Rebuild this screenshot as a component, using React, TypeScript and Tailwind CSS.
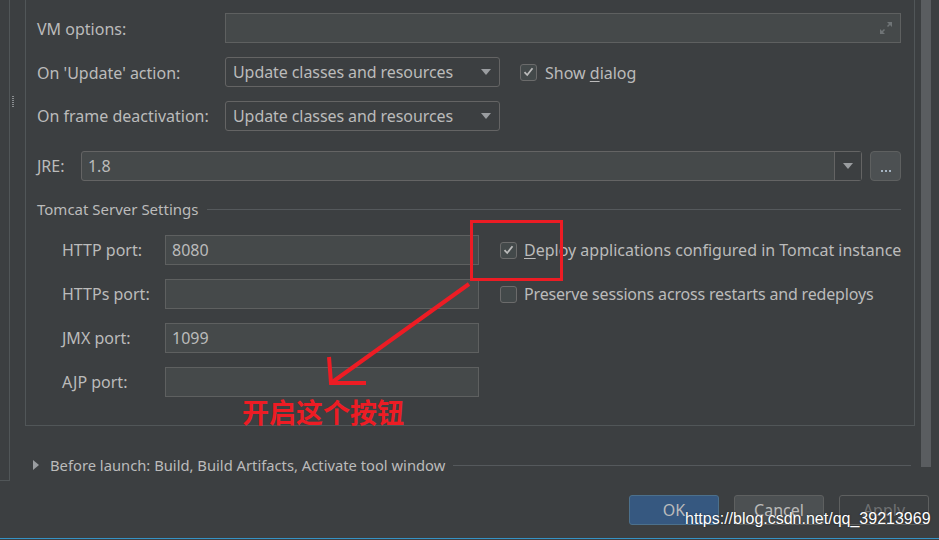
import React from 'react';

const Checkbox = ({ checked }: { checked?: boolean }) => (
    <span className="flex h-[17px] w-[17px] shrink-0 items-center justify-center rounded-[3px] border border-[#6b6b6b] bg-[#43494a]">
        {checked && (
            <svg width="11" height="10" viewBox="0 0 11 10">
                <path d="M1.5 5.2 L4.2 8 L9.5 1.2" stroke="#bbbbbb" strokeWidth="1.8" fill="none" />
            </svg>
        )}
    </span>
);

const Triangle = () => (
    <svg width="10" height="6" viewBox="0 0 10 6">
        <path d="M0 0 H10 L5 6 Z" fill="#9a9da0" />
    </svg>
);

const Dropdown = ({ value }: { value: string }) => (
    <div className="flex h-[30px] w-[275px] items-center justify-between rounded-[3px] border border-[#646464] bg-[#3c3f41] pl-[7px] pr-[8px]">
        <span className="tracking-[-0.08px]">{value}</span>
        <Triangle />
    </div>
);

const PortRow = ({ label, value }: { label: string; value?: string }) => (
    <div className="flex h-[30px] items-center">
        <span className="w-[103px]">{label}</span>
        <div className="flex h-[30px] w-[314px] items-center border border-[#5e6060] bg-[#45494a] pl-[6px]">
            {value}
        </div>
    </div>
);

const App = () => {
    return (
        <div
            className="relative h-[540px] w-[939px] overflow-hidden bg-[#3c3f41] text-[16px] text-[#bbbbbb]"
            style={{ fontFamily: '"Noto Sans", "Open Sans", sans-serif' }}
        >
            <div className="flex h-[481px]">
                {/* left side strip */}
                <div className="relative h-[481px] w-[10px] shrink-0 border-b border-r border-[#515658]">
                    <div className="absolute left-[12px] top-[96px] grid grid-cols-2 gap-x-[1px] gap-y-[1px]">
                        {Array.from({ length: 12 }).map((_, i) => (
                            <span key={i} className="h-[1px] w-[1px] bg-[#8a8d90]" />
                        ))}
                    </div>
                </div>

                <div className="ml-[15px] flex w-[890px] flex-col">
                    {/* settings panel */}
                    <div className="flex h-[426px] flex-col border-x border-b border-[#515658] pl-[11px] pr-[13px] pt-[13px]">
                        <div className="flex flex-col gap-[14px]">
                            <div className="flex h-[30px] items-center">
                                <span className="w-[188px] pt-[1px]">VM options:</span>
                                <div className="flex h-[30px] flex-1 items-center justify-end border border-[#5e6060] bg-[#45494a] pr-[7px]">
                                    <svg width="14" height="14" viewBox="0 0 14 14">
                                        <path d="M8 1 H13 V6 Z M1 8 V13 H6 Z" fill="#6f7476" />
                                        <path d="M11 3 L8.5 5.5 M3 11 L5.5 8.5" stroke="#6f7476" strokeWidth="1.5" />
                                    </svg>
                                </div>
                            </div>
                            <div className="flex h-[30px] items-center">
                                <span className="w-[188px] pt-[1px]">On 'Update' action:</span>
                                <Dropdown value="Update classes and resources" />
                                <div className="ml-[20px] flex items-center gap-[8px]">
                                    <Checkbox checked />
                                    <span className="pt-[1px]">
                                        Show <span className="underline underline-offset-2">d</span>ialog
                                    </span>
                                </div>
                            </div>
                            <div className="flex h-[30px] items-center">
                                <span className="w-[188px]">On frame deactivation:</span>
                                <Dropdown value="Update classes and resources" />
                            </div>
                        </div>

                        <div className="mt-[20px] flex h-[30px] items-center">
                            <span className="w-[44px]">JRE:</span>
                            <div className="flex h-[30px] w-[782px] items-center rounded-[3px] border border-[#646464] bg-[#45494a]">
                                <span className="flex-1 pl-[6px]">1.8</span>
                                <div className="flex h-full w-[27px] items-center justify-center border-l border-[#646464] bg-[#3c3f41]">
                                    <Triangle />
                                </div>
                            </div>
                            <div className="ml-[8px] flex h-[30px] w-[31px] items-end justify-center rounded-[4px] border border-[#5e6060] bg-[#4c5052] pb-[8px]">
                                <div className="flex gap-[2px]">
                                    <span className="h-[2px] w-[2px] bg-[#a5b4c2]" />
                                    <span className="h-[2px] w-[2px] bg-[#a5b4c2]" />
                                    <span className="h-[2px] w-[2px] bg-[#a5b4c2]" />
                                </div>
                            </div>
                        </div>

                        <div className="mt-[18px] flex h-[20px] items-center gap-[9px]">
                            <span className="text-[15px]">Tomcat Server Settings</span>
                            <div className="h-px flex-1 bg-[#55595c]" />
                        </div>

                        <div className="mt-[16px] flex gap-[21px] pl-[25px]">
                            <div className="flex flex-col gap-[14px]">
                                <PortRow label="HTTP port:" value="8080" />
                                <PortRow label="HTTPs port:" />
                                <PortRow label="JMX port:" value="1099" />
                                <PortRow label="AJP port:" />
                            </div>
                            <div className="flex flex-col gap-[14px]">
                                <div className="flex h-[30px] items-center gap-[7px]">
                                    <Checkbox checked />
                                    <span className="whitespace-nowrap">
                                        <span className="underline underline-offset-2">D</span>eploy applications configured in Tomcat instance
                                    </span>
                                </div>
                                <div className="flex h-[30px] items-center gap-[7px]">
                                    <Checkbox />
                                    <span className="whitespace-nowrap tracking-[-0.17px]">Preserve sessions across restarts and redeploys</span>
                                </div>
                            </div>
                        </div>
                    </div>

                    {/* before launch */}
                    <div className="mt-[29px] flex h-[20px] items-center pl-[8px]">
                        <svg width="6" height="10" viewBox="0 0 6 10">
                            <path d="M0 0 L6 5 L0 10 Z" fill="#9a9da0" />
                        </svg>
                        <span className="ml-[11px] text-[14.75px]">Before launch: Build, Build Artifacts, Activate tool window</span>
                        <div className="ml-[8px] mr-[4px] h-px flex-1 bg-[#55595c]" />
                    </div>
                </div>

                {/* scrollbar */}
                <div className="ml-[6px] h-[467px] w-[10px] bg-[#5a5d60]" />
            </div>

            {/* dialog buttons */}
            <div className="flex justify-end gap-[15px] pr-[10px] pt-[14px]">
                <button className="h-[30px] w-[90px] rounded-[3px] border border-[#4c708c] bg-[#365880] text-[#bbbbbb]">OK</button>
                <button className="h-[30px] w-[90px] rounded-[3px] border border-[#5e6060] bg-[#4c5052] text-[#bbbbbb]">Cancel</button>
                <button className="h-[30px] w-[90px] rounded-[3px] border border-[#5e6060] bg-[#3c3f41] text-[#6f7173]">Apply</button>
            </div>

            <div className="absolute bottom-[1px] left-0 h-px w-full bg-[#3592c4]" />

            {/* annotation overlay */}
            <div className="pointer-events-none absolute left-[470px] top-[220px] h-[61px] w-[93px] border-[3px] border-[#ed1c24]" />
            <svg className="pointer-events-none absolute left-0 top-0" width="939" height="540">
                <path d="M469 284 L331 383" stroke="#ed1c24" strokeWidth="4" fill="none" />
                <path d="M329 357 L331 383 L366 383" stroke="#ed1c24" strokeWidth="4" fill="none" />
            </svg>
            <div
                className="pointer-events-none absolute left-[242px] top-[395px] text-[27px] font-bold leading-[34px] text-[#ed1c24]"
                style={{ fontFamily: '"Noto Sans CJK SC", sans-serif' }}
            >
                开启这个按钮
            </div>
            <div
                className="pointer-events-none absolute left-[685px] top-[509px] text-[16px] leading-[20px] text-white [text-shadow:0_0_2px_rgba(0,0,0,0.6)]"
                style={{ fontFamily: '"Liberation Sans", Arial, sans-serif' }}
            >
                https://blog.csdn.net/qq_39213969
            </div>
        </div>
    );
};

export default App;
